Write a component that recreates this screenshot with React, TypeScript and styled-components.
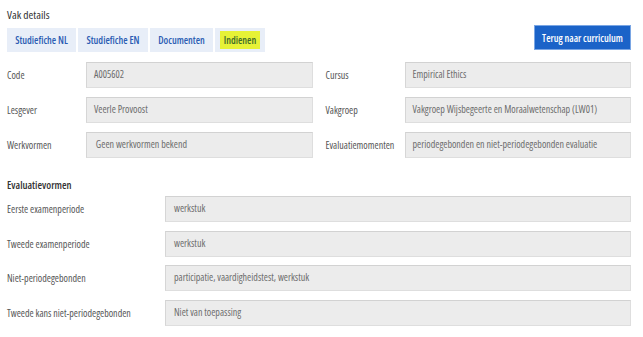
import React, { ReactElement } from 'react';
import styled, { createGlobalStyle } from 'styled-components';

const GlobalStyle = createGlobalStyle`
  body {
    background: #ffffff;
    margin: 0;
  }
`;

const Page = styled.div`
  color: #444;
  font-family: "Open Sans", "Liberation Sans", sans-serif;
  font-size: 10px;
  font-stretch: 75%;
  padding: 8px 12px 0 7px;
`;

const HeaderRow = styled.div`
  align-items: flex-end;
  display: flex;
  justify-content: space-between;
`;

const Title = styled.h2`
  color: #333;
  font-size: 11.5px;
  font-weight: 500;
  line-height: 14px;
  margin: 0 0 6px;
`;

const Tabs = styled.div`
  display: flex;
  gap: 2px;
`;

const Tab = styled.div<{ w: number }>`
  align-items: center;
  background: #e8eef8;
  color: #2b5cb3;
  display: flex;
  font-weight: 600;
  height: 24px;
  justify-content: center;
  width: ${(p) => p.w}px;
`;

// yellow highlight drawn over the tab label
const Marker = styled.span`
  background: #e6f236;
  color: #3d6a2a;
  padding: 2px 4px;
`;

const BackButton = styled.div`
  align-items: center;
  background: #1b63c8;
  border: 1px solid #7aa6e4;
  color: #fff;
  display: flex;
  font-weight: 600;
  height: 23px;
  justify-content: center;
  margin-bottom: 2px;
  width: 95px;
`;

const TopGrid = styled.div`
  column-gap: 13px;
  display: grid;
  grid-template-columns: 1fr 1fr;
  margin-top: 10px;
  row-gap: 9px;
`;

const Field = styled.div<{ label: number }>`
  align-items: center;
  display: grid;
  grid-template-columns: ${(p) => p.label}px 1fr;
  white-space: nowrap;
`;

const Label = styled.div`
  color: #555;
`;

const Value = styled.div<{ pad: number }>`
  align-items: center;
  background: #ececec;
  border: 1px solid #dedede;
  border-left-color: #d6d6d6;
  border-top-color: #d2d2d2;
  box-sizing: border-box;
  color: #6c6c6c;
  display: flex;
  height: 26px;
  padding: 0 0 2px ${(p) => p.pad}px;
`;

const Section = styled.h3`
  color: #333;
  font-size: 10.5px;
  font-weight: 600;
  line-height: 14px;
  margin: 20px 0 4px;
`;

const Rows = styled.div`
  display: grid;
  row-gap: 8.5px;
`;

const top: [string, string][] = [
  ['Code', 'A005602'],
  ['Cursus', 'Empirical Ethics'],
  ['Lesgever', 'Veerle Provoost'],
  ['Vakgroep', 'Vakgroep Wijsbegeerte en Moraalwetenschap (LW01)'],
  ['Werkvormen', '\u00a0Geen werkvormen bekend'],
  ['Evaluatiemomenten', 'periodegebonden en niet-periodegebonden evaluatie'],
];

const evaluations: [string, string][] = [
  ['Eerste examenperiode', 'werkstuk'],
  ['Tweede examenperiode', 'werkstuk'],
  ['Niet-periodegebonden', 'participatie, vaardigheidstest, werkstuk'],
  ['Tweede kans niet-periodegebonden', 'Niet van toepassing'],
];

const App = (): ReactElement => (
  <Page>
    <GlobalStyle />
    <HeaderRow>
      <div>
        <Title>Vak details</Title>
        <Tabs>
          <Tab w={69}>Studiefiche NL</Tab>
          <Tab w={70}>Studiefiche EN</Tab>
          <Tab w={63}>Documenten</Tab>
          <Tab w={50}><Marker>Indienen</Marker></Tab>
        </Tabs>
      </div>
      <BackButton>Terug naar curriculum</BackButton>
    </HeaderRow>
    <TopGrid>
      {top.map(([label, value]) => (
        <Field key={label} label={79}>
          <Label>{label}</Label>
          <Value pad={7}>{value}</Value>
        </Field>
      ))}
    </TopGrid>
    <Section>Evaluatievormen</Section>
    <Rows>
      {evaluations.map(([label, value]) => (
        <Field key={label} label={158}>
          <Label>{label}</Label>
          <Value pad={8}>{value}</Value>
        </Field>
      ))}
    </Rows>
  </Page>
);

export default App;
